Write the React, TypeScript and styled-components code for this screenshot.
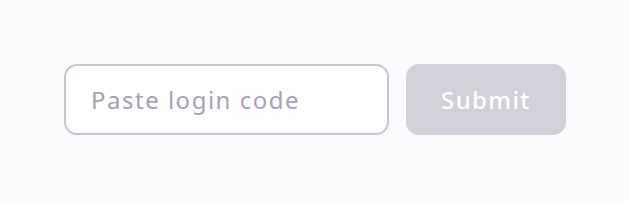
import styled, { createGlobalStyle } from 'styled-components'

const GlobalStyle = createGlobalStyle`
    html, body {
        margin: 0;
        padding: 0;
        background: #fbfbfe;
    }
`

const Page = styled.div`
    width: 630px;
    height: 202px;
    box-sizing: border-box;
    padding: 64px 0 0 64px;
    background: #fbfbfe;
`

const Form = styled.form`
    display: flex;
    flex-direction: row;
    gap: 17px;
`

const CodeInput = styled.input`
    width: 325px;
    height: 71px;
    box-sizing: border-box;
    border: 2px solid #c9c4d1;
    border-radius: 13px;
    background: #ffffff;
    padding: 0 0 0 25px;
    font-family: 'Noto Sans', sans-serif;
    font-size: 24px;
    letter-spacing: 1.5px;
    color: #4a4155;
    outline: none;

    &::placeholder {
        color: #a9a0b4;
    }
`

const SubmitButton = styled.button`
    width: 160px;
    height: 71px;
    border: none;
    border-radius: 13px;
    background: #d3d0d9;
    color: #ffffff;
    font-family: 'Noto Sans', sans-serif;
    font-size: 24px;
    font-weight: 500;
    letter-spacing: 1.4px;
    cursor: default;
`

export default function App() {
    return (
        <Page>
            <GlobalStyle />
            <Form onSubmit={(e) => e.preventDefault()}>
                <CodeInput placeholder="Paste login code" />
                <SubmitButton type="submit" disabled>Submit</SubmitButton>
            </Form>
        </Page>
    )
}
